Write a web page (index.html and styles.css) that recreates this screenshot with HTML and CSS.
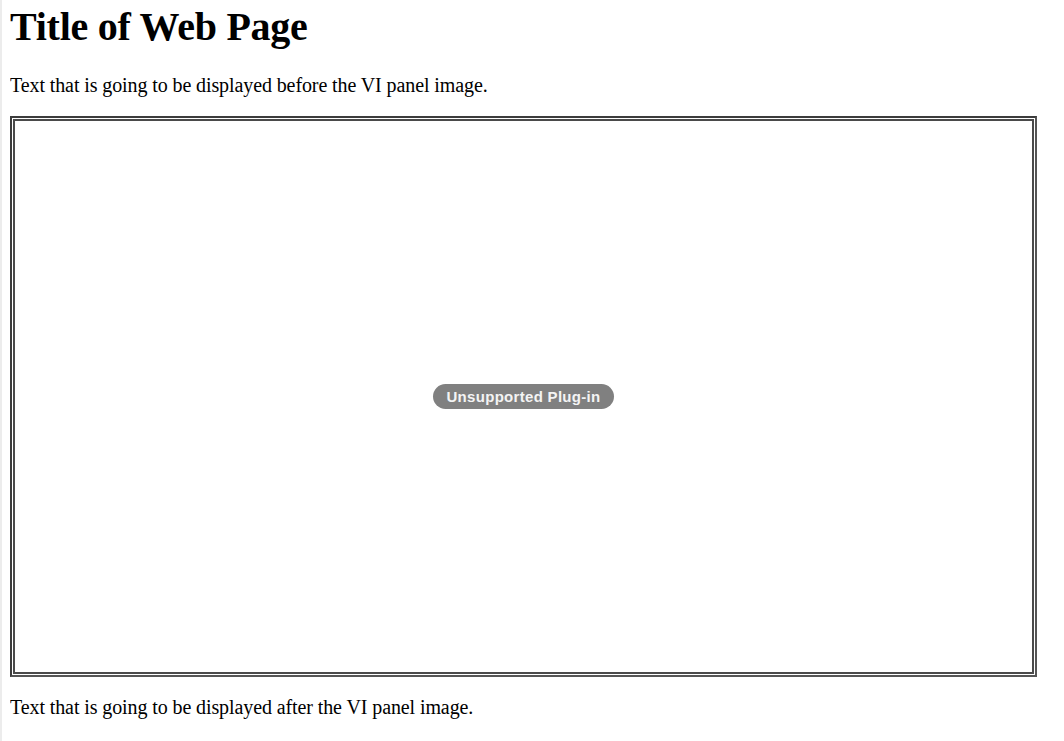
FILE: index.html
```html
<!DOCTYPE html>
<html>
<head>
<meta charset="utf-8">
<title>Title of Web Page</title>
<link rel="stylesheet" href="styles.css">
</head>
<body>
<h1 class="title">Title of Web Page</h1>
<p class="text text-before">Text that is going to be displayed before the VI panel image.</p>
<div class="panel">
  <div class="panel-inner">
    <span class="badge">Unsupported Plug-in</span>
  </div>
</div>
<p class="text text-after">Text that is going to be displayed after the VI panel image.</p>
</body>
</html>
```
FILE: styles.css
```css
html {
  background: #ffffff;
  border-left: 2px solid #ececec;
  min-height: 100%;
  box-sizing: border-box;
}
body {
  margin: 0 0 0 8px;
  padding-top: 3px;
  font-family: "Liberation Serif", "Times New Roman", serif;
  color: #000;
}
.title {
  margin: 0;
  font-size: 40px;
  font-weight: bold;
  line-height: 48px;
  letter-spacing: -0.25px;
}
.text {
  margin: 0;
  font-size: 20px;
  line-height: 24px;
  letter-spacing: -0.1px;
}
.text-before {
  margin-top: 22px;
}
.panel {
  box-sizing: border-box;
  width: 1027px;
  height: 561px;
  margin-top: 19px;
  border: 2px solid #3c3c3c;
  border-right-color: #555;
  border-bottom-color: #555;
  padding: 1px;
}
.panel-inner {
  box-sizing: border-box;
  height: 100%;
  border: 2px solid #4a4a4a;
  display: flex;
  align-items: center;
  justify-content: center;
}
.badge {
  display: inline-block;
  background: #808080;
  color: #f4f4f4;
  font-family: "Liberation Sans", Arial, sans-serif;
  font-weight: bold;
  font-size: 15px;
  letter-spacing: 0.3px;
  line-height: 25px;
  height: 25px;
  padding: 0 13px;
  border-radius: 13px;
}
.text-after {
  margin-top: 18px;
}
```
